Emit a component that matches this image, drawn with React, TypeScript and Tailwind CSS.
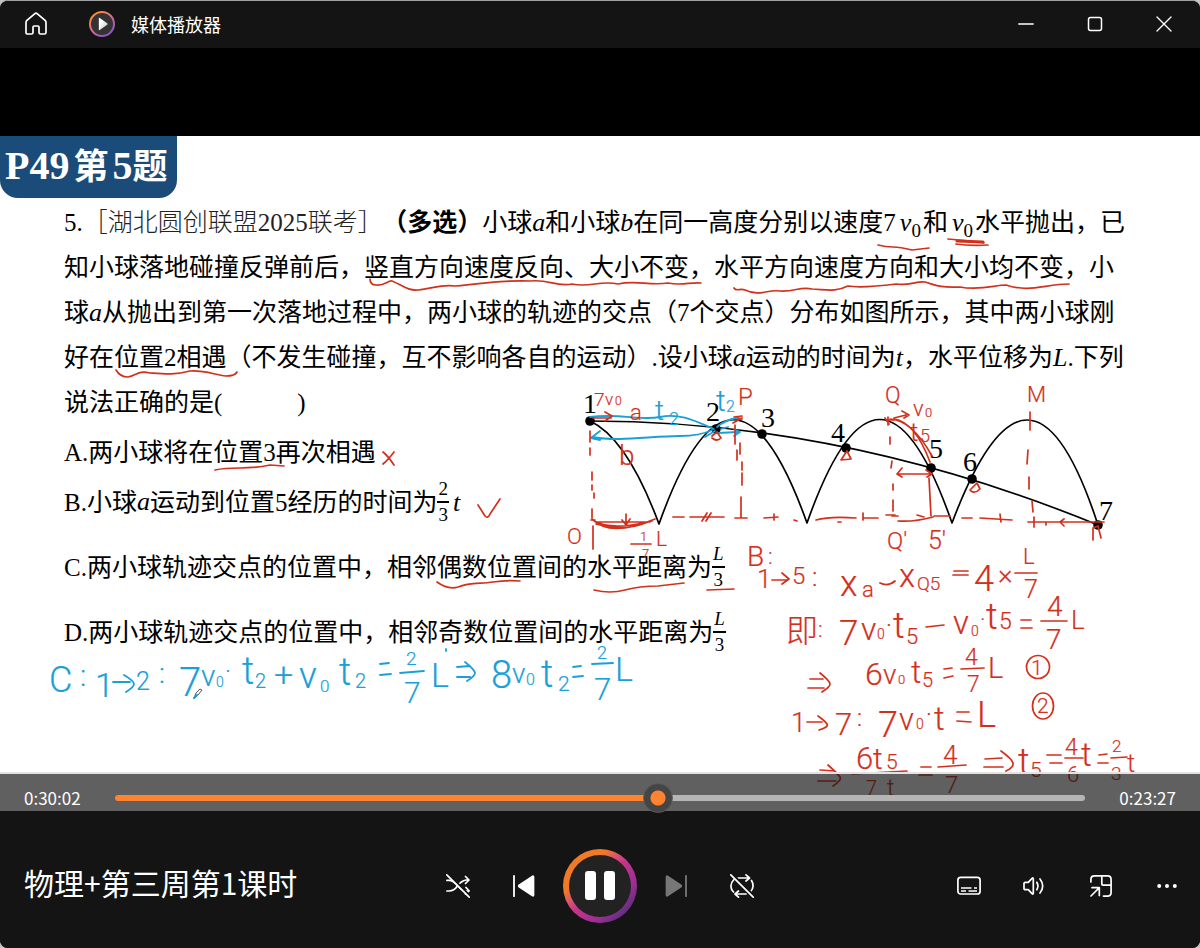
import { useState } from 'react';
import type { CSSProperties, ReactNode } from 'react';

const TOTAL_SECONDS = 3209;

const RED = '#d3301c';
const BLUE = '#1b9fd8';

// [text, x, baseline, size]
type Mark = [string, number, number, number];

const redMarks: Mark[] = [
  // labels on the figure
  ['7', 594, 406, 19],
  ['v', 605, 405, 17],
  ['0', 615, 405, 12],
  ['a', 630, 420, 22],
  ['b', 619, 465, 28],
  ['P', 738, 405, 24],
  ['Q', 885, 403, 23],
  ['v', 913, 416, 22],
  ['0', 925, 417, 13],
  ['t', 910, 441, 26],
  ['5', 920, 442, 18],
  ['M', 1027, 402, 22],
  ['O', 567, 544, 22],
  ['1', 640, 541, 13],
  ['7', 642, 558, 13],
  ['L', 656, 546, 21],
  ["Q'", 887, 549, 24],
  ["5'", 928, 549, 25],
  // line 1
  ['B', 747, 566, 28],
  [':', 768, 564, 22],
  ['1', 757, 588, 26],
  ['5', 792, 584, 24],
  [':', 812, 586, 26],
  ['x', 840, 596, 36],
  ['a', 862, 597, 22],
  ['x', 899, 587, 33],
  ['Q5', 917, 590, 19],
  ['4', 974, 591, 36],
  ['×', 998, 584, 28],
  ['L', 1023, 564, 22],
  ['7', 1024, 598, 25],
  // line 2
  ['即', 786, 642, 32],
  [':', 818, 637, 22],
  ['7', 839, 645, 35],
  ['v', 861, 640, 32],
  ['0', 877, 639, 14],
  ['·', 886, 634, 24],
  ['t', 893, 638, 36],
  ['5', 906, 644, 22],
  ['v', 953, 634, 33],
  ['0', 971, 636, 14],
  ['·', 980, 627, 22],
  ['t', 986, 629, 36],
  ['5', 999, 629, 23],
  ['4', 1047, 616, 28],
  ['7', 1046, 649, 28],
  ['L', 1071, 629, 26],
  // line 3
  ['6', 865, 685, 32],
  ['v', 883, 684, 28],
  ['0', 898, 684, 13],
  ['t', 911, 683, 32],
  ['5', 922, 687, 20],
  ['4', 965, 665, 23],
  ['7', 967, 692, 23],
  ['L', 988, 678, 29],
  ['1', 1031, 675, 21],
  // line 4
  ['1', 791, 732, 27],
  ['7', 835, 735, 31],
  [':', 857, 726, 24],
  ['7', 878, 737, 36],
  ['v', 899, 730, 31],
  ['0', 916, 729, 14],
  ['·', 926, 723, 24],
  ['t', 934, 730, 33],
  ['L', 977, 727, 36],
  ['2', 1037, 713, 21],
  // line 5
  ['6', 856, 769, 31],
  ['t', 873, 769, 30],
  ['5', 886, 769, 21],
  ['7', 866, 795, 20],
  ['t', 887, 796, 23],
  ['4', 943, 764, 26],
  ['7', 945, 793, 24],
  ['t', 1018, 774, 36],
  ['5', 1030, 777, 21],
  ['4', 1065, 755, 23],
  ['6', 1067, 782, 22],
  ['t', 1081, 766, 33],
  ['2', 1112, 752, 17],
  ['3', 1111, 780, 19],
  ['t', 1127, 772, 25],
];

const blueMarks: Mark[] = [
  // travel times on the figure
  ['t', 655, 420, 28],
  ['2', 669, 425, 18],
  ['t', 716, 411, 30],
  ['2', 726, 412, 16],
  // working for option C
  ['C', 49, 692, 36],
  [':', 80, 686, 30],
  ['1', 95, 697, 34],
  ['2', 136, 690, 25],
  [':', 159, 683, 28],
  ['7', 179, 696, 40],
  ['v', 201, 686, 30],
  ['0', 216, 687, 14],
  ['·', 225, 680, 24],
  ['t', 242, 684, 38],
  ['2', 255, 688, 20],
  ['+', 274, 686, 34],
  ['v', 299, 688, 37],
  ['0', 320, 692, 17],
  ['t', 339, 685, 38],
  ['2', 355, 688, 20],
  ['2', 406, 665, 19],
  ['7', 404, 703, 30],
  ['L', 431, 687, 34],
  ['8', 491, 688, 38],
  ['v', 512, 683, 28],
  ['0', 526, 685, 16],
  ['t', 541, 687, 38],
  ['2', 558, 691, 21],
  ['2', 597, 659, 18],
  ['7', 594, 700, 31],
  ['L', 615, 681, 34],
];

const redStrokes = [
  // underlines in the question
  'M878 245Q886 247 893 247T912 250L929 248',
  'M948 239L970 241 984 243M956 244Q970 246 988 245',
  'M370 279Q370 285 376 285C385 286 388 280 392 281C402 285 408 291 418 290C432 289 440 284 455 286C490 283 500 280 530 281C550 279 555 287 572 284C590 288 600 280 618 284C636 280 650 286 668 283C682 286 690 282 701 283',
  'M734 288C736 292 740 288 745 290C760 297 768 289 780 291C795 292 800 286 812 289C830 290 835 292 848 286C860 288 880 286 896 284C910 286 915 281 925 282C935 285 940 288 960 287C980 291 995 285 1006 285C1030 293 1045 284 1069 284',
  'M116 370Q120 377 128 377C136 376 138 370 150 373C165 374 175 375 190 371C205 370 215 375 226 376Q235 376 237 372',
  'M215 470Q224 468 240 468T270 465L284 466',
  'M437 582Q448 590 458 587C470 582 480 584 493 582S510 580 520 581',
  'M594 590Q610 594 625 590T658 586L684 583M707 590L734 589',
  // answers
  'M383 452Q388 456 394 465M394 452Q388 460 383 464',
  'M478 505L485 516Q488 519 490 514L500 499',
  // vertical guides
  'M590 431V442M590 448V455M592 472V480M592 485V490M594 493V498M592 509V518M593 526L593 549M591 520H595',
  'M735 425V444M737 450V460M740 443V454M742 462V470M742 473V485M741 497V518M735 518H747',
  'M890 437V444M892 461L891 468M893 484V490M893 500V511M892 516H898M929 478L931 516',
  'M1030 412V430M1028 450L1027 464M1029 477V489M1032 501L1033 512M1034 517V527',
  // ground line
  'M673 517H684M690 517H698M702 521L707 513M706 521L711 513M698 517H724M764 518L778 517M774 514V520M794 520L797 521M816 520Q830 516 856 518M863 513V520M864 518H878M838 522H841',
  'M886 515H895M898 521Q915 522 933 517M917 515L924 517M934 516H950M962 518H972M980 518L1012 520M1000 514L1001 522M1028 522H1104M1064 519L1060 522 1064 526M1046 522V525',
  // motion of the two balls
  'M593 418H611M605 412L612 416 605 421M631 544H651',
  'M592 519Q610 538 655 519M594 521Q612 531 652 521M596 524Q625 532 648 522M597 522H650M626 514V525L622 520M626 525L630 519',
  'M738 418L742 419M734 417L742 416M733 423L742 418',
  'M885 418L889 424M888 417L888 425M888 420H894M894 418L906 415M902 411L909 415 904 418',
  'M894 419Q915 422 930 462M890 419Q912 420 932 456M897 474H932M902 468L897 474 902 477M926 470L932 474 927 477',
  'M712 436L717 432 721 438Q717 442 712 438M841 460L847 451 851 459Z M970 490L977 483 980 489Q975 494 971 491M1093 540L1093 528 1098 526 1101 538',
  // arrows, bars and equals signs of the working
  'M772 580H787M782 573L789 579 782 584M880 583Q888 587 895 581M954 571H968M953 575H968M1015 573H1037',
  'M926 627L944 625M1021 620H1031M1021 628H1032M1041 621H1067',
  'M810 679H823M808 688H824M820 673Q830 681 830 684T822 692M944 669L952 668M944 678L953 676M961 669L984 668',
  'M807 722H822M818 716Q825 721 827 724T819 730M957 712L969 712M957 721L971 722',
  'M820 770L835 771M818 781L836 781M828 765Q838 774 840 777T833 786M852 774L907 771M921 767H931M919 775L932 775M938 767L966 765',
  'M985 759L1002 758M984 767L1003 767M1001 751Q1012 759 1013 763T1006 771M1047 755H1061M1050 763H1062M1065 758L1083 758M1099 755L1107 754M1098 763L1108 763M1111 758L1127 757',
];

const blueStrokes = [
  'M590 417C620 413 640 421 660 417S695 421 714 429M592 437C620 442 650 436 680 436Q700 436 712 430M600 431L591 438 600 440M705 437L715 431M717 427Q725 420 737 418M718 433L738 432M721 429L728 427M734 429L740 432 734 436',
  'M113 682H130M124 675Q134 681 134 684T126 692M380 664L389 663M380 675L391 674M400 673L424 671M457 667L470 666M457 677L470 677M465 662Q475 670 475 673T467 681M573 667L581 666M573 677L583 676M592 664L613 663M446 649V651',
];

const points = [
  [590, 421],
  [716, 429],
  [762, 434],
  [846, 448],
  [931, 468],
  [972, 479],
  [1098, 525],
];

// where each point's number is written
const pointLabels = [
  [583, 413],
  [706, 421],
  [761, 427],
  [831, 442],
  [929, 458],
  [963, 471],
  [1099, 520],
];

function Marks({ marks, color }: { marks: Mark[]; color: string }) {
  return (
    <g fill={color} stroke={color} strokeWidth="0.2" className="font-['Roboto','Noto_Sans_CJK_SC',sans-serif] font-light">
      {marks.map(([text, x, y, size], i) => (
        <text key={i} x={x} y={y} fontSize={size}>
          {text}
        </text>
      ))}
    </g>
  );
}

function Figure() {
  return (
    <svg
      viewBox="0 136 1200 675"
      width="1200"
      height="675"
      className="pointer-events-none absolute top-0 left-0 max-w-none"
      fill="none"
      strokeLinecap="round"
      strokeLinejoin="round"
    >
      {/* trajectories */}
      <g stroke="#000" strokeWidth="1.7">
        <path d="M590 421Q844 421 1098 525" />
        <path d="M590 421Q627 438 659 524Q733 316 807 523Q880 316 952 523Q1030 316 1098 525" />
      </g>
      {points.map(([x, y]) => (
        <circle key={x} cx={x} cy={y} r="4.8" fill="#000" />
      ))}
      <g fill="#000" className="font-['Liberation_Serif',serif]" fontSize="28">
        {pointLabels.map(([x, y], i) => (
          <text key={x} x={x} y={y}>
            {i + 1}
          </text>
        ))}
      </g>

      {/* ink */}
      <g stroke={BLUE} strokeWidth="1.8">
        {blueStrokes.map((d) => (
          <path key={d} d={d} />
        ))}
      </g>
      <g stroke={RED} strokeWidth="1.7">
        {redStrokes.map((d) => (
          <path key={d} d={d} />
        ))}
        <path d="M957 241L983 242" strokeWidth="3" />
        <circle cx="1038" cy="667" r="11.5" />
        <ellipse cx="1043" cy="706" rx="10.5" ry="13" />
      </g>
      <Marks marks={redMarks} color={RED} />
      <Marks marks={blueMarks} color={BLUE} />

      {/* pen cursor */}
      <path d="M194 698L196 693 200 689 202 690 198 695Z" stroke="#555" strokeWidth="1" />
      <path d="M194 698L197 695" stroke={BLUE} strokeWidth="2" />
    </svg>
  );
}

function V({ children }: { children: ReactNode }) {
  return <i className="font-['Liberation_Serif',serif] text-[26px] leading-none">{children}</i>;
}

function V0() {
  return (
    <span className="mr-[2px] ml-1 leading-none">
      <V>v</V>
      <sub className="bottom-[-6px] font-['Liberation_Serif',serif] text-[19px] leading-none align-baseline">0</sub>
    </span>
  );
}

function Fraction({ top, bottom }: { top: ReactNode; bottom: ReactNode }) {
  return (
    <span className="inline-flex flex-col items-center font-['Liberation_Serif',serif] text-[19px] leading-[24px]">
      <span className="border-b-[2px] border-black px-[1px]">{top}</span>
      <span>{bottom}</span>
    </span>
  );
}

function Question() {
  return (
    <div className="pt-[2px] pl-[64px] font-['Liberation_Serif','Noto_Sans_CJK_SC',sans-serif] text-[25px] leading-[45px] whitespace-nowrap text-black">
      <p>
        5.<span className="font-light text-[#222]">［湖北圆创联盟2025联考］</span>
        <b className="ml-3">（多选）</b>小球<V>a</V>和小球<V>b</V>在同一高度分别以速度7<V0 />和<V0 />水平抛出，已
        <br />
        知小球落地碰撞反弹前后，竖直方向速度反向、大小不变，水平方向速度方向和大小均不变，小
        <br />球<V>a</V>从抛出到第一次落地过程中，两小球的轨迹的交点（7个交点）分布如图所示，其中两小球刚
        <br />
        好在位置2相遇（不发生碰撞，互不影响各自的运动）.设小球<V>a</V>运动的时间为<V>t</V>，水平位移为<V>L</V>.下列
        <br />
        说法正确的是(<span className="inline-block w-[75px]" />)
      </p>
      <ul className="pt-[2px]">
        <li className="flex h-[50px] items-center">A.两小球将在位置3再次相遇</li>
        <li className="flex h-[50px] items-center">
          B.小球<V>a</V>运动到位置5经历的时间为
          <Fraction top="2" bottom="3" />
          <span className="ml-1">
            <V>t</V>
          </span>
        </li>
        <li className="mt-[15px] flex h-[50px] items-center">
          C.两小球轨迹交点的位置中，相邻偶数位置间的水平距离为
          <Fraction top={<i>L</i>} bottom="3" />
        </li>
        <li className="mt-[15px] flex h-[50px] items-center">
          D.两小球轨迹交点的位置中，相邻奇数位置间的水平距离为
          <Fraction top={<i>L</i>} bottom="3" />
        </li>
      </ul>
    </div>
  );
}

function Icon({ size = 24, children }: { size?: number; children: ReactNode }) {
  return (
    <svg
      width={size}
      height={size}
      viewBox={`0 0 ${size} ${size}`}
      fill="none"
      stroke="currentColor"
      strokeWidth="1.7"
      strokeLinecap="round"
      strokeLinejoin="round"
    >
      {children}
    </svg>
  );
}

function IconButton({ label, className = '', children }: { label: string; className?: string; children: ReactNode }) {
  return (
    <button type="button" aria-label={label} className={`flex h-12 w-[66px] items-center justify-center ${className}`}>
      {children}
    </button>
  );
}

function TitleBar() {
  return (
    <header className="flex h-[47px] shrink-0 items-center bg-[#141414] pb-[2px] text-white">
      <button type="button" aria-label="主页" className="ml-6">
        <Icon>
          <path d="M2 10.3Q2 9.2 2.9 8.3L10.6 1.8Q12 .6 13.4 1.8L21.1 8.3Q22 9.2 22 10.3V20.4Q22 22 20.4 22H16.6Q15 22 15 20.4V15.2Q15 14 13.8 14H10.2Q9 14 9 15.2V20.4Q9 22 7.4 22H3.6Q2 22 2 20.4Z" />
        </Icon>
      </button>
      <svg width="26" height="26" viewBox="0 0 26 26" className="ml-[41px]">
        <defs>
          <linearGradient id="logoRing" x1="0" y1="0" x2="0.7" y2="1">
            <stop offset="0.15" stopColor="#ff8a35" />
            <stop offset="0.6" stopColor="#c96a9a" />
            <stop offset="1" stopColor="#8a55c8" />
          </linearGradient>
          <linearGradient id="logoPlay" x1="0" y1="0" x2="1" y2="1">
            <stop offset="0.3" stopColor="#fff" />
            <stop offset="1" stopColor="#bbb" />
          </linearGradient>
        </defs>
        <circle cx="13" cy="13" r="12" fill="#333" stroke="url(#logoRing)" strokeWidth="2" />
        <path d="M9.8 7.4Q9.8 6.4 10.7 7L18.2 12.2Q19.2 13 18.2 13.8L10.7 19Q9.8 19.6 9.8 18.6Z" fill="url(#logoPlay)" />
      </svg>
      <h1 className="ml-4 text-[18px] leading-6">媒体播放器</h1>
      <div className="mr-[2px] ml-auto flex self-stretch">
        <button type="button" aria-label="最小化" className="flex w-[69px] items-center justify-center">
          <Icon size={16}>
            <path d="M.8 8H15.2" strokeWidth="1.4" />
          </Icon>
        </button>
        <button type="button" aria-label="最大化" className="flex w-[69px] items-center justify-center">
          <Icon size={16}>
            <rect x="1.5" y="1.5" width="13" height="13" rx="2" strokeWidth="1.5" />
          </Icon>
        </button>
        <button type="button" aria-label="关闭" className="flex w-[69px] items-center justify-center">
          <Icon size={16}>
            <path d="M1 1L15 15M15 1L1 15" strokeWidth="1.4" />
          </Icon>
        </button>
      </div>
    </header>
  );
}

function formatTime(seconds: number) {
  const h = Math.floor(seconds / 3600);
  const m = String(Math.floor((seconds % 3600) / 60)).padStart(2, '0');
  const s = String(seconds % 60).padStart(2, '0');
  return `${h}:${m}:${s}`;
}

function Progress() {
  const [position, setPosition] = useState(1802);
  const played = { '--played': `${(position / TOTAL_SECONDS) * 100}%` } as CSSProperties;

  return (
    <div className="absolute inset-x-0 bottom-0 z-10 flex h-[39px] items-center border-t-2 border-[#e2e2e2] bg-[#141414]/68 bg-clip-padding pt-[11px] text-[17px] leading-6 text-white">
      <span className="w-[115px] pl-6">{formatTime(position)}</span>
      <input
        type="range"
        aria-label="播放进度"
        min={0}
        max={TOTAL_SECONDS}
        value={position}
        onChange={(e) => setPosition(Number(e.target.value))}
        style={played}
        className="h-[30px] min-w-0 flex-1 appearance-none bg-transparent [&::-webkit-slider-runnable-track]:h-[6px] [&::-webkit-slider-runnable-track]:rounded-full [&::-webkit-slider-runnable-track]:bg-[linear-gradient(to_right,#ff8331_var(--played),#b5b5b5_var(--played))] [&::-webkit-slider-thumb]:-mt-[12px] [&::-webkit-slider-thumb]:size-[30px] [&::-webkit-slider-thumb]:appearance-none [&::-webkit-slider-thumb]:rounded-full [&::-webkit-slider-thumb]:border [&::-webkit-slider-thumb]:border-[#5a5a5a] [&::-webkit-slider-thumb]:bg-[radial-gradient(#ff8331_7px,#454545_8px)]"
      />
      <span className="w-[115px] pr-6 text-right">{formatTime(TOTAL_SECONDS - position)}</span>
    </div>
  );
}

function Controls() {
  return (
    <footer className="grid h-[137px] shrink-0 grid-cols-[1fr_auto_1fr] items-center bg-[#141414] pt-3 text-white">
      <h2 className="pb-2 pl-6 text-[30px] leading-10 whitespace-nowrap">物理+第三周第1课时</h2>

      <div className="flex items-center">
        <IconButton label="随机播放">
          <Icon>
            <path d="M0.9 6.3H3Q7 6.3 12 12T20 17H22.5" />
            <path d="M.9 17H3Q8 17 11.5 12T20 6H23M19.5 2.5L23 6 19.5 9.5M20 13.5L23 16.8 19.5 20" />
            <path d="M2.5 .5L24.5 22.5" stroke="#141414" strokeWidth="2.4" />
            <path d="M.8 .8L23.2 23.2" />
          </Icon>
        </IconButton>
        <IconButton label="上一个">
          <Icon>
            <path d="M2 1.8V22.2" strokeWidth="1.8" />
            <path d="M21.5 3V21Q21.5 22.3 20.4 21.6L7.2 12.8Q6.2 12 7.2 11.2L20.4 2.4Q21.5 1.7 21.5 3Z" fill="currentColor" />
          </Icon>
        </IconButton>
        <button
          type="button"
          aria-label="暂停"
          className="mx-[6px] size-[74px] rounded-full bg-[linear-gradient(135deg,#f07a25_30%,#dd5470_40%,#c5348c_50%,#a02e93_70%,#5f2f80_86%)] p-[6px]"
        >
          <span className="flex size-full items-center justify-center gap-2 rounded-full bg-[#222]">
            <span className="h-[29px] w-[11px] rounded-[3px] bg-white" />
            <span className="h-[29px] w-[11px] rounded-[3px] bg-white" />
          </span>
        </button>
        <IconButton label="下一个" className="text-[#777]">
          <Icon>
            <path d="M22 1.8V22.2" strokeWidth="1.8" />
            <path d="M2.5 3V21Q2.5 22.3 3.6 21.6L16.8 12.8Q17.8 12 16.8 11.2L3.6 2.4Q2.5 1.7 2.5 3Z" fill="currentColor" />
          </Icon>
        </IconButton>
        <IconButton label="重复">
          <Icon>
            <path d="M8 4H19.5M16 .9L19.5 4 16 7M16 20H5M8.5 17L5 20 8.5 23.2M4 5.5Q.9 8.5 .9 12T3.5 18M21.5 6.5Q23.1 9 23.1 12T20 18.5" />
            <path d="M2.5 .5L24.5 22.5" stroke="#141414" strokeWidth="2.4" />
            <path d="M.8 .8L23.2 23.2" />
          </Icon>
        </IconButton>
      </div>

      <div className="flex justify-end">
        <IconButton label="字幕">
          <Icon>
            <rect x=".9" y="3.4" width="22.2" height="16.6" rx="2.8" />
            <path d="M4 14H14.5M17 14H20M4 17H9M11.5 17H20" strokeWidth="1.5" strokeLinecap="butt" />
          </Icon>
        </IconButton>
        <IconButton label="音量">
          <Icon>
            <path d="M1 9.6Q1 8.3 2.3 8.3H5.3L9 4.4Q10.3 3.3 10.3 5V19Q10.3 20.7 9 19.6L5.3 15.7H2.3Q1 15.7 1 14.4ZM13.8 8.3Q16 12 13.8 15.7M17 5Q22.4 12 17 19" />
          </Icon>
        </IconButton>
        <IconButton label="小型播放器">
          <Icon>
            <path d="M1.9 8V5.5Q1.9 1.9 5.5 1.9H18.5Q22.1 1.9 22.1 5.5V18.5Q22.1 22.1 18.5 22.1H14.5M12.8 1.9V10Q12.8 11.2 14 11.2H22.1M2 22L9.8 14.2M3 13.7H10.3V21.5" />
          </Icon>
        </IconButton>
        <IconButton label="更多">
          <Icon>
            <g fill="currentColor" stroke="none">
              <circle cx="4.2" cy="12" r="2" />
              <circle cx="12" cy="12" r="2" />
              <circle cx="19.8" cy="12" r="2" />
            </g>
          </Icon>
        </IconButton>
      </div>
    </footer>
  );
}

export default function App() {
  return (
    <div className="min-h-screen bg-[#c4c4c4]">
      <div
        lang="zh-CN"
        className="flex min-h-screen flex-col overflow-hidden rounded-lg border-t border-[#a0a0a0] bg-black font-['Noto_Sans_CJK_SC',sans-serif]"
      >
        <TitleBar />
        <main className="flex flex-1 flex-col pt-[88px]">
          <section className="relative flex-1 bg-white pb-[146px]">
            <div className="h-[62px] w-[177px] rounded-b-[18px] bg-[#1b4c79] pl-[5px] font-['Liberation_Serif','Noto_Sans_CJK_SC',serif] text-[40px] leading-[60px] font-bold whitespace-nowrap text-white">
              P49<span className="mx-1 text-[35px] leading-none">第</span>5<span className="text-[35px] leading-none">题</span>
            </div>
            <Question />
            <Figure />
            <Progress />
          </section>
        </main>
        <Controls />
      </div>
    </div>
  );
}
